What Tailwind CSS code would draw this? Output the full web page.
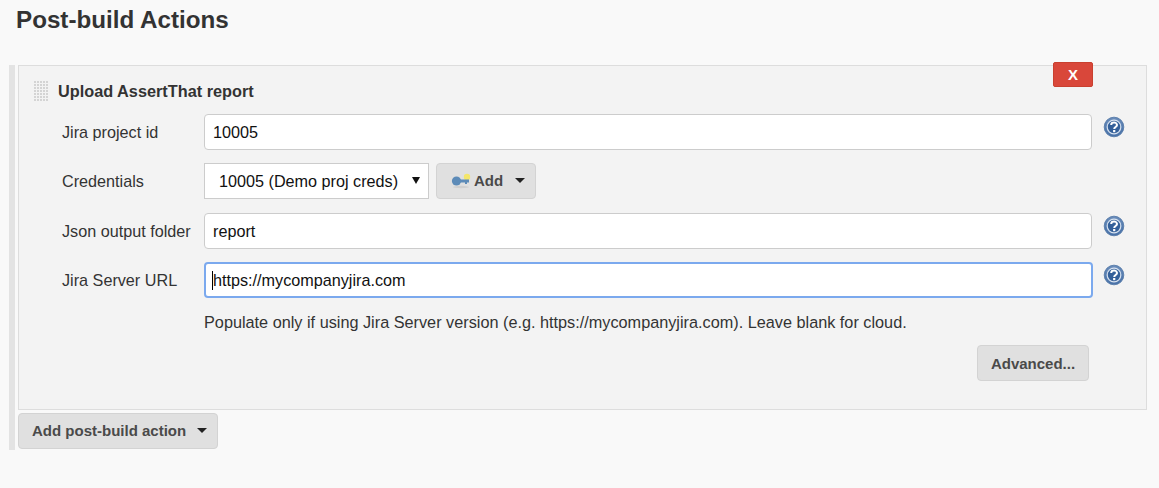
<!DOCTYPE html>
<html lang="en">
  <head>
    <meta charset="UTF-8" />
    <title>Post-build Actions</title>
    <script src="https://cdn.jsdelivr.net/npm/@tailwindcss/browser@4"></script>
  </head>
  <body class="h-[488px] overflow-hidden bg-[#f9f9f9] font-['Liberation_Sans',Arial,sans-serif] text-[16.2px] text-[#333]">
    <h1 class="pl-4 pt-[7px] h-[65px] text-[24.2px] leading-[26px] font-bold">Post-build Actions</h1>

    <div class="ml-[9px] w-[1138px] border-l-[6px] border-[#e3e3e3] pl-[3px] h-[385px]">
      <div class="relative h-[345px] border border-[#ddd] bg-[#f3f3f3]">
        <button class="absolute left-[1034px] top-[-4px] h-[25px] w-[40px] rounded-[2px] border border-[#c9402f] bg-[#d9473a] pt-px text-[15px] font-bold text-white">X</button>

        <!-- title -->
        <div class="flex h-[48px] items-start pl-[15px] pt-[15px]">
          <svg width="16" height="22">
            <defs>
              <pattern id="dots" width="3" height="3" patternUnits="userSpaceOnUse">
                <rect width="2" height="2" fill="#d4d4d4" />
              </pattern>
            </defs>
            <rect width="15" height="21" fill="url(#dots)" />
          </svg>
          <span class="ml-[8px] text-[16.3px] font-bold leading-[20px]">Upload AssertThat report</span>
        </div>

        <!-- project id -->
        <div class="flex h-[36px] items-center">
          <label class="w-[185px] pl-[43px] pt-px">Jira project id</label>
          <input value="10005" class="h-[36px] w-[888px] rounded-[4px] border border-[#ccc] bg-white px-[8px] pt-px text-[#111]" />
          <svg width="22" height="22" viewBox="0 0 22 22" class="ml-[11px] mb-[10px]"><use href="#help" /></svg>
        </div>

        <!-- credentials -->
        <div class="mt-[13px] flex h-[36px] items-center">
          <label class="w-[185px] pl-[43px] pt-px">Credentials</label>
          <div class="relative">
            <select class="h-[36px] w-[225px] appearance-none border border-[#ccc] bg-white pl-[14px] pt-px text-[#111]">
              <option>10005 (Demo proj creds)</option>
            </select>
            <svg width="9" height="8" class="absolute left-[208px] top-[14px]"><path d="M0 0H8L4 7Z" fill="#111" /></svg>
          </div>
          <button class="ml-[7px] flex h-[36px] w-[100px] items-center rounded-[4px] border border-[#d3d3d3] bg-[#e0e0e0] pl-[14px] font-bold text-[15px] text-[#4a4a4a]">
            <svg width="20" height="16" viewBox="0 0 20 16">
              <ellipse cx="10" cy="14" rx="8" ry="1.2" fill="#cfcfcf" />
              <circle cx="16" cy="4" r="3.2" fill="#f4e66a" />
              <circle cx="5.5" cy="8" r="4.6" fill="#5d8bb8" />
              <path d="M8 6.5H18V9.5H16V11H14V9.5H8Z" fill="#5d8bb8" />
            </svg>
            <span class="ml-[3px] pt-px">Add</span>
            <svg width="10" height="6" class="ml-[12px]"><path d="M0 0H10L5 5Z" fill="#222" /></svg>
          </button>
        </div>

        <!-- json folder -->
        <div class="mt-[14px] flex h-[36px] items-center">
          <label class="w-[185px] pl-[43px] pt-px">Json output folder</label>
          <input value="report" class="h-[36px] w-[888px] rounded-[4px] border border-[#ccc] bg-white px-[8px] pt-px text-[#111]" />
          <svg width="22" height="22" viewBox="0 0 22 22" class="ml-[11px] mb-[10px]"><use href="#help" /></svg>
        </div>

        <!-- server url -->
        <div class="mt-[13px] flex h-[36px] items-center">
          <label class="w-[185px] pl-[43px] pt-px">Jira Server URL</label>
          <div class="relative">
            <input value="https://mycompanyjira.com" class="block h-[36px] w-[889px] rounded-[4px] border-2 border-[#7ba9ee] bg-white px-[7px] pt-px text-[#111] outline-none" />
            <span class="absolute left-[8px] top-[9px] h-[19px] w-px bg-black"></span>
          </div>
          <svg width="22" height="22" viewBox="0 0 22 22" class="ml-[10px] mb-[10px]"><use href="#help" /></svg>
        </div>

        <p class="mt-[15px] pl-[185px] text-[16.25px] leading-[18px]">Populate only if using Jira Server version (e.g. https://mycompanyjira.com). Leave blank for cloud.</p>

        <div class="mt-[14px] flex justify-end pr-[57px]">
          <button class="h-[36px] w-[112px] rounded-[4px] border border-[#d3d3d3] bg-[#e0e0e0] pt-[2px] text-[15px] font-bold text-[#4a4a4a]">Advanced...</button>
        </div>
      </div>

      <button class="mt-[3px] flex h-[36px] w-[200px] items-center rounded-[4px] border border-[#d3d3d3] bg-[#e0e0e0] pl-[13px] text-[15px] font-bold text-[#4a4a4a]">
        <span>Add post-build action</span>
        <svg width="10" height="6" class="ml-[11px]"><path d="M0 0H10L5 5Z" fill="#222" /></svg>
      </button>
    </div>

    <!-- shared help icon -->
    <svg width="0" height="0" class="absolute">
      <defs>
        <radialGradient id="helpFill" cx="50%" cy="40%" r="60%">
          <stop offset="0%" stop-color="#9db5d6" />
          <stop offset="100%" stop-color="#3f6aa3" />
        </radialGradient>
        <g id="help">
          <circle cx="11" cy="11" r="9.8" fill="url(#helpFill)" stroke="#5f82ae" />
          <circle cx="11" cy="11" r="6.8" fill="#34609a" stroke="#d5e0ee" stroke-width="1.2" />
          <path d="M8.2 9C8.2 5.8 14 5.8 14 9C14 11 11.2 11 11.2 13" fill="none" stroke="#fff" stroke-width="2" />
          <rect x="10.1" y="14" width="2.2" height="2.2" fill="#fff" />
        </g>
      </defs>
    </svg>
  </body>
</html>
